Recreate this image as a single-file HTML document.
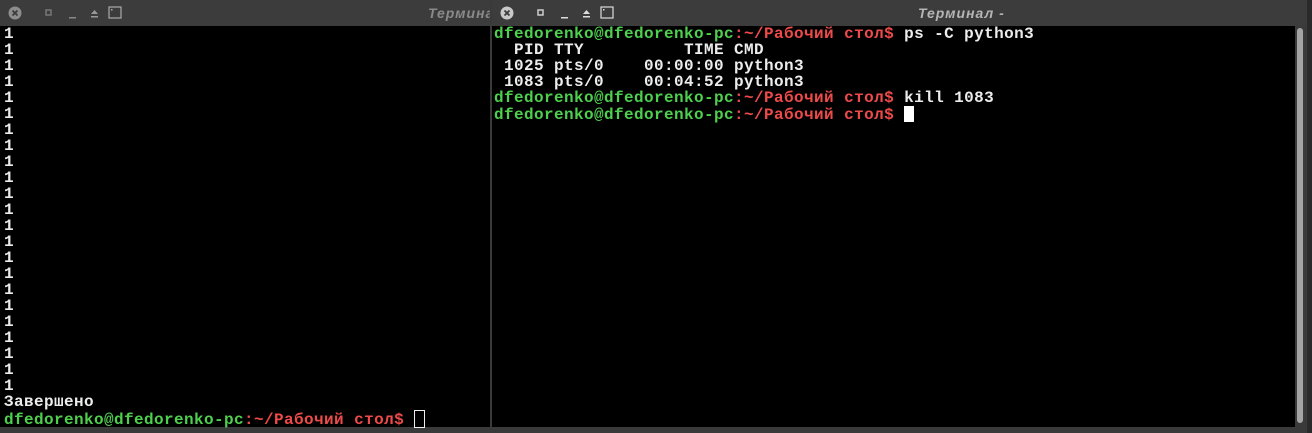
<!DOCTYPE html>
<html><head><meta charset="utf-8"><style>
body{margin:0;width:1312px;height:433px;background:#353535;position:relative;overflow:hidden;font-family:"Liberation Mono","DejaVu Sans Mono",monospace}
.win{position:absolute;top:0;height:433px;background:#3a3a3a;overflow:hidden}
.tb{position:absolute;top:0;left:0;right:0;height:26px;background:#3c3c3c}
.term{position:absolute;top:26px;background:#000;color:#ececec;font-weight:bold;font-size:16px;line-height:16px;letter-spacing:0.4px;white-space:pre}
.g{color:#4ed04e}.r{color:#ee4a4a}
.title{position:absolute;top:5px;font:italic bold 14px "Liberation Sans",sans-serif;color:#8a8a8a;letter-spacing:1px}
.ic{position:absolute;top:6px}
.cur{display:inline-block;width:9px;height:15px;vertical-align:-2px}
</style></head><body>
<div class="win" style="left:0;width:490px">
 <div class="tb">
  <svg class="ic" style="left:8px" width="130" height="15">
   <circle cx="7" cy="7" r="6.5" fill="#8d8d8d"/><path d="M4.5 4.5l5 5M9.5 4.5l-5 5" stroke="#3c3c3c" stroke-width="1.8"/>
   <rect x="38" y="4" width="5" height="5" fill="none" stroke="#777" stroke-width="1.5"/>
   <rect x="61" y="11" width="7" height="1.5" fill="#888"/>
   <path d="M83 8l3.5-4 3.5 4z" fill="#999"/><rect x="83" y="10" width="7" height="1.5" fill="#999"/>
   <rect x="101" y="1" width="12" height="11" fill="none" stroke="#aaa" stroke-width="1.2"/><rect x="103" y="3" width="1.5" height="1.5" fill="#aaa"/>
  </svg>
  <div class="title" style="left:428px">Термина</div>
 </div>
 <div class="term" style="left:0;width:486px;height:401px;padding-left:4px">1
1
1
1
1
1
1
1
1
1
1
1
1
1
1
1
1
1
1
1
1
1
1
Завершено
<span class="g">dfedorenko@dfedorenko-pc</span><span class="r">:~/Рабочий стол$</span> <span class="cur" style="border:1.5px solid #eee;box-sizing:border-box;height:18px;width:11px;vertical-align:-4px"></span></div>
</div>
<div style="position:absolute;left:490px;top:0;width:2px;height:433px;background:#3a3a3a"></div>
<div class="win" style="left:492px;width:815px">
 <div class="tb">
  <svg class="ic" style="left:8px" width="140" height="15">
   <circle cx="7" cy="7" r="6.5" fill="#c9c9c9"/><path d="M4.5 4.5l5 5M9.5 4.5l-5 5" stroke="#3c3c3c" stroke-width="1.8"/>
   <rect x="38" y="4" width="5" height="5" fill="none" stroke="#ccc" stroke-width="1.5"/>
   <rect x="61" y="11" width="7" height="1.5" fill="#ddd"/>
   <path d="M83 8l3.5-4 3.5 4z" fill="#ddd"/><rect x="83" y="10" width="7" height="1.5" fill="#ddd"/>
   <rect x="101" y="1" width="12" height="11" fill="none" stroke="#ddd" stroke-width="1.2"/><rect x="103" y="3" width="1.5" height="1.5" fill="#ddd"/>
  </svg>
  <div class="title" style="left:426px;color:#b5b5b5">Терминал -</div>
 </div>
 <div class="term" style="left:0;width:801px;height:401px;padding-left:2px"><span class="g">dfedorenko@dfedorenko-pc</span><span class="r">:~/Рабочий стол$</span> ps -C python3
  PID TTY          TIME CMD
 1025 pts/0    00:00:00 python3
 1083 pts/0    00:04:52 python3
<span class="g">dfedorenko@dfedorenko-pc</span><span class="r">:~/Рабочий стол$</span> kill 1083
<span class="g">dfedorenko@dfedorenko-pc</span><span class="r">:~/Рабочий стол$</span> <span class="cur" style="background:#fff;height:16px;width:10px;vertical-align:-3px"></span></div>
 <div style="position:absolute;left:805px;top:28px;width:6px;height:395px;background:#a4a4a4;border-radius:3px"></div>
</div>
<div style="position:absolute;left:1307px;top:0;width:5px;height:433px;background:#2a2a2a"></div>
</body></html>
